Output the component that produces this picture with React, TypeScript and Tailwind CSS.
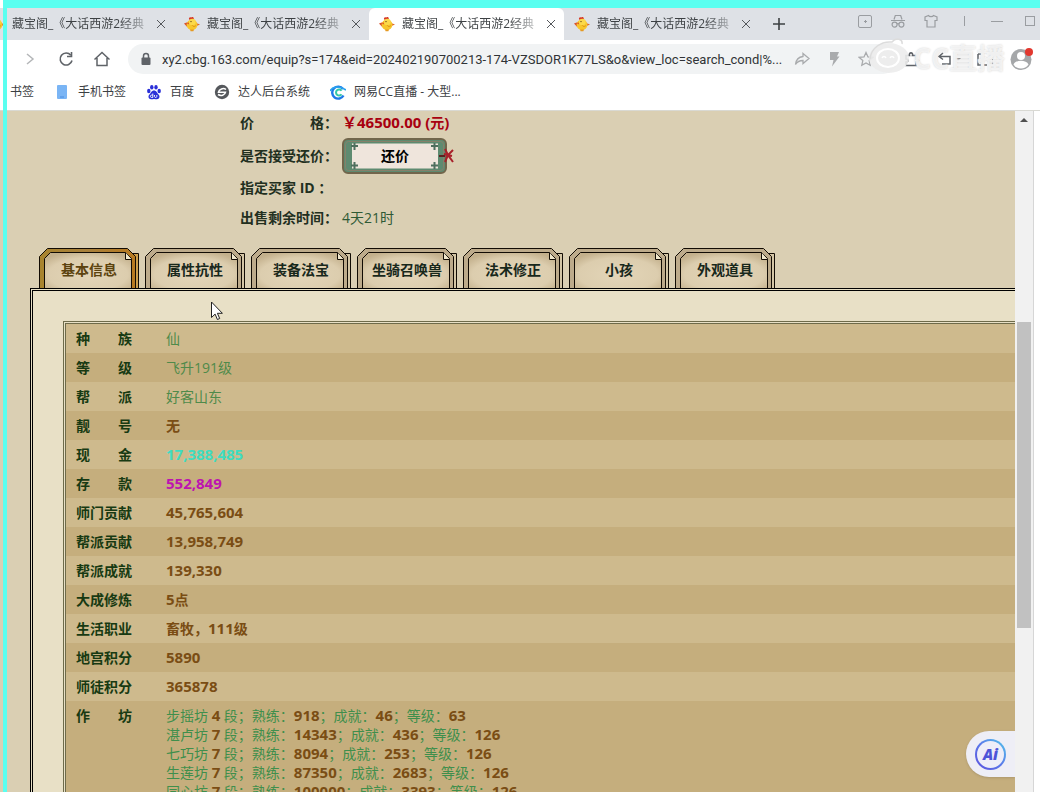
import React, { useState } from 'react';

interface InfoRow {
    label: string;
    value: string;
    tone: string;
}

interface Workshop {
    name: string;
    stage: number;
    skill: number;
    achievement: number;
    level: number;
}

const PAGE_TABS = ['基本信息', '属性抗性', '装备法宝', '坐骑召唤兽', '法术修正', '小孩', '外观道具'];

const GREEN = 'text-[#4f8a4a]';
const BROWN = 'text-[#7a4d14] font-bold';

const INFO_ROWS: InfoRow[] = [
    { label: '种族', value: '仙', tone: GREEN },
    { label: '等级', value: '飞升191级', tone: GREEN },
    { label: '帮派', value: '好客山东', tone: GREEN },
    { label: '靓号', value: '无', tone: BROWN },
    { label: '现金', value: '17,388,485', tone: 'text-[#3edcc0] font-bold' },
    { label: '存款', value: '552,849', tone: 'text-[#bd14b0] font-bold' },
    { label: '师门贡献', value: '45,765,604', tone: BROWN },
    { label: '帮派贡献', value: '13,958,749', tone: BROWN },
    { label: '帮派成就', value: '139,330', tone: BROWN },
    { label: '大成修炼', value: '5点', tone: BROWN },
    { label: '生活职业', value: '畜牧，111级', tone: BROWN },
    { label: '地宫积分', value: '5890', tone: BROWN },
    { label: '师徒积分', value: '365878', tone: BROWN },
];

const WORKSHOPS: Workshop[] = [
    { name: '步摇坊', stage: 4, skill: 918, achievement: 46, level: 63 },
    { name: '湛卢坊', stage: 7, skill: 14343, achievement: 436, level: 126 },
    { name: '七巧坊', stage: 7, skill: 8094, achievement: 253, level: 126 },
    { name: '生莲坊', stage: 7, skill: 87350, achievement: 2683, level: 126 },
    { name: '同心坊', stage: 7, skill: 100000, achievement: 3393, level: 126 },
];

const ChickIcon = () => (
    <svg className="h-4 w-4 shrink-0" viewBox="0 0 16 16">
        <path d="M0 7.5L4 6l1 4-2 .8z" fill="#d9532c" />
        <path d="M16 8.5L12 7l-.6 3.4z" fill="#e0672c" />
        <path d="M5 3.5C4.6 1.6 6 .8 7 1.6 8 .4 10 1 9.8 2.8L9 4.4z" fill="#d63a26" />
        <circle cx="8" cy="8.8" r="5.4" fill="#f7c62c" />
        <circle cx="8.4" cy="6" r="3.3" fill="#fbd94a" />
        <path d="M5 6.5l-2.4.8L5 8.4z" fill="#e2572a" />
        <circle cx="7" cy="5.6" r=".7" fill="#5b3710" />
        <path d="M8 9.2c1.2 1.8 3 1.6 4 .2" stroke="#e09a16" fill="none" />
        <path d="M6 13.6h4l-.6 1.6H6.6z" fill="#e59a22" />
    </svg>
);

const CloseIcon = () => (
    <svg className="h-2.5 w-2.5" viewBox="0 0 10 10" stroke="#55585c">
        <path d="M1 1l8 8M9 1L1 9" />
    </svg>
);

const BrowserTab = ({ active }: { active: boolean }) => (
    <div className={`flex w-[195px] shrink-0 items-center pl-[10px] ${active ? 'rounded-t-md bg-white' : ''}`}>
        <ChickIcon />
        <span className="ml-[7px] w-[134px] overflow-hidden whitespace-nowrap bg-gradient-to-r from-[#3c4043] from-80% to-[#3c4043]/30 bg-clip-text text-xs text-transparent">
            藏宝阁_《大话西游2经典
        </span>
        <button aria-label="关闭标签页" className="ml-[10px]">
            <CloseIcon />
        </button>
    </div>
);

const WindowControls = () => (
    <div className="flex h-[26px] items-center gap-[17px] pr-[2px] text-[#9a9da1]">
        <svg className="h-4 w-4" viewBox="0 0 16 16" fill="none" stroke="currentColor">
            <rect x="1.5" y="2.5" width="13" height="12" rx="1.5" />
            <path d="M7 8.5h3M8.5 7v3" />
        </svg>
        <svg className="h-4 w-4" viewBox="0 0 16 16" fill="none" stroke="currentColor" strokeWidth="1.2">
            <path d="M4 6.5l1.3-4h5.4l1.3 4M1 7.5h14" />
            <circle cx="4.6" cy="11.6" r="2.5" />
            <circle cx="11.4" cy="11.6" r="2.5" />
            <path d="M7 11c.6-.5 1.4-.5 2 0" />
        </svg>
        <svg className="h-4 w-4" viewBox="0 0 16 16" fill="none" stroke="currentColor" strokeWidth="1.2">
            <path d="M5.5 2.5c.6 1.6 4.4 1.6 5 0L14 4v3.5h-2V14H4V7.5H2V4z" />
        </svg>
        <svg className="h-4 w-4" viewBox="0 0 16 16" stroke="currentColor">
            <path d="M8.5 3v10" />
        </svg>
        <svg className="h-4 w-4" viewBox="0 0 16 16" stroke="currentColor">
            <path d="M2 8.5h12" />
        </svg>
        <svg className="h-4 w-4" viewBox="0 0 16 16" fill="none" stroke="currentColor">
            <rect x="3.5" y="3.5" width="9" height="9" />
        </svg>
    </div>
);

const TabStrip = () => (
    <div className="flex h-8 shrink-0 justify-between overflow-hidden bg-[#dee1e6]">
        <div className="-ml-[21px] flex">
            {[0, 1, 2, 3].map((n) => (
                <BrowserTab key={n} active={n === 2} />
            ))}
            <button aria-label="新建标签页" className="ml-[13px]">
                <svg className="h-3.5 w-3.5" viewBox="0 0 14 14" stroke="#3c4043" strokeWidth="1.6">
                    <path d="M7 1v12M1 7h12" />
                </svg>
            </button>
        </div>
        <WindowControls />
    </div>
);

const Watermark = () => (
    <div className="pointer-events-none absolute right-[35px] top-[38px] flex h-10 items-center gap-[2px] whitespace-nowrap text-[28px] font-bold leading-10 text-white/70 [text-shadow:0_0_2px_#cfcfcf]">
        <svg className="h-10 w-11" viewBox="0 0 44 40" fill="none">
            <ellipse cx="22" cy="20" rx="20" ry="15" fill="#ececec" fillOpacity=".9" />
            <path d="M3 21C4 10 14 3 25 4c4-5 11-3 10 2" stroke="#dcdcdc" strokeWidth="1.5" />
            <ellipse cx="21" cy="20" rx="11" ry="9" stroke="#fff" strokeWidth="2" />
            <path d="M15 20c1-2 3-2 4 0M23 20c1-2 3-2 4 0" stroke="#fff" strokeWidth="1.5" />
        </svg>
        CC直播
    </div>
);

const Toolbar = () => (
    <div className="flex h-[38px] shrink-0 items-center bg-white pl-[21px] pr-[7px] text-[#5f6368]">
        <div className="flex items-center gap-[18px]">
            <button aria-label="前进">
                <svg className="h-[18px] w-[18px]" viewBox="0 0 18 18" fill="none" stroke="#b4b6b8" strokeWidth="1.5">
                    <path d="M6 4l6 5-6 5" />
                </svg>
            </button>
            <button aria-label="刷新">
                <svg className="h-[18px] w-[18px]" viewBox="0 0 18 18" fill="none" stroke="currentColor" strokeWidth="1.6">
                    <path d="M13.8 5.2A6 6 0 1 0 15 10.5" />
                    <path d="M14.5 2v4.5H10" />
                </svg>
            </button>
            <button aria-label="主页">
                <svg className="h-[18px] w-[18px]" viewBox="0 0 18 18" fill="none" stroke="currentColor" strokeWidth="1.5">
                    <path d="M1.500 9.500L9 2.500l7.500 7M4 8v7.500h10V8" />
                </svg>
            </button>
        </div>
        <div className="ml-[17px] flex h-[30px] min-w-0 flex-1 items-center rounded-full bg-[#f1f3f4] pl-3">
            <svg className="h-3.5 w-3 shrink-0" viewBox="0 0 12 14">
                <rect x="1.5" y="5.5" width="9" height="7.5" rx="1" fill="#5f6368" />
                <path d="M3.5 6V4a2.500 2.500 0 0 1 5 0v2" fill="none" stroke="#5f6368" strokeWidth="1.5" />
            </svg>
            <input
                aria-label="地址栏"
                readOnly
                value="xy2.cbg.163.com/equip?s=174&eid=202402190700213-174-VZSDOR1K77LS&o&view_loc=search_cond|%..."
                className="ml-[10px] min-w-0 flex-1 bg-transparent pt-[2px] font-[Roboto,sans-serif] text-[13px] text-[#303336] outline-none"
            />
            <div className="flex items-center gap-4 pl-2 pr-6 text-[#a9abad]">
                <svg className="h-4 w-4" viewBox="0 0 16 16" fill="none" stroke="currentColor" strokeWidth="1.3">
                    <path d="M9 2.500L15 7.500 9 12.500V9.500C5 9.500 3 11 1.500 13.500 2 9 4.500 6 9 5.500z" />
                </svg>
                <svg className="h-4 w-4" viewBox="0 0 16 16" fill="currentColor">
                    <path d="M4 1h9l-2 4.500h2.500L6 15.500l1.500-6.500H4z" />
                </svg>
                <svg className="h-4 w-4" viewBox="0 0 16 16" fill="none" stroke="currentColor" strokeWidth="1.3">
                    <path d="M8 1.500l2 4.400 4.800.5-3.600 3.200 1 4.700L8 11.900l-4.200 2.400 1-4.700L1.200 6.400 6 5.900z" />
                </svg>
            </div>
        </div>
        <div className="ml-[7px] flex items-center gap-4">
            <svg className="h-4 w-4" viewBox="0 0 16 16" fill="none" stroke="currentColor" strokeWidth="1.6">
                <path d="M1 4.500h3.500c-1-3.500 4-3.500 3 0H11V8c3.300-.8 3.300 4 0 3v3.500H1V11c2.500 0 2.500-3 0-3z" />
            </svg>
            <svg className="h-4 w-6" viewBox="0 0 24 16" fill="none" stroke="currentColor" strokeWidth="1.5">
                <path d="M6 2L2 5.500l4 3M2 5.500h11V13H5" />
                <path d="M18 7h6l-3 3z" fill="currentColor" stroke="none" />
            </svg>
            <svg className="h-4 w-4" viewBox="0 0 16 16" fill="none" stroke="currentColor" strokeWidth="1.5">
                <path d="M1 3v11h3M1 3h3M7 14h3M13 13v-3M16 8v6" />
            </svg>
            <button aria-label="用户">
                <svg className="h-6 w-6" viewBox="0 0 24 24">
                    <circle cx="12" cy="12.500" r="10.500" fill="#a5a7a9" />
                    <circle cx="12" cy="9" r="4" fill="#fff" />
                    <path d="M4.500 17.500c2-5 13-5 15 0a9 9 0 0 1-15 0z" fill="#fff" />
                    <circle cx="20" cy="5" r="4" fill="#e2382f" />
                </svg>
            </button>
        </div>
    </div>
);

const BookmarkBar = () => (
    <nav className="flex h-[33px] shrink-0 items-center border-b border-[#d9d9d3] bg-white pb-1 pl-[10px] text-xs text-[#3c4043]">
        <a href="#bookmarks">书签</a>
        <a href="#mobile" className="ml-5 flex items-center gap-2">
            <svg className="h-4 w-4" viewBox="0 0 16 16">
                <rect x="3" y="1" width="10" height="14" rx="1" fill="#7ab5f5" />
                <path d="M6 13h4" stroke="#4b8de0" />
            </svg>
            手机书签
        </a>
        <a href="#baidu" className="ml-5 flex items-center gap-2">
            <svg className="h-4 w-4" viewBox="0 0 16 16" fill="#2a2fd8">
                <ellipse cx="2.8" cy="7" rx="1.7" ry="2.2" />
                <ellipse cx="5.8" cy="3.2" rx="1.7" ry="2.3" />
                <ellipse cx="10" cy="3.2" rx="1.7" ry="2.3" />
                <ellipse cx="13.2" cy="7" rx="1.7" ry="2.2" />
                <path d="M8 6.500c2.500 0 3 2.500 4.600 4 1.800 2 .8 4.700-1.600 4.700-1.200 0-2-.3-3-.3s-1.800.3-3 .3c-2.400 0-3.400-2.700-1.600-4.700C5 9 5.500 6.500 8 6.500z" />
                <path d="M6.800 9.500v4H5.500c-1.500 0-1.500-2.400 0-2.400h1.300M8.500 11v1.500c0 1.300 2.300 1.300 2.300 0V11" fill="none" stroke="#fff" strokeWidth=".9" />
            </svg>
            百度
        </a>
        <a href="#console" className="ml-5 flex items-center gap-2">
            <svg className="h-4 w-4" viewBox="0 0 16 16">
                <circle cx="8" cy="8" r="7.2" fill="#55585c" />
                <path d="M12 5.500C9.500 3.500 5 5 4.500 8.200h7C11 11 7 12.500 4 10.500" stroke="#fff" strokeWidth="1.6" fill="none" />
            </svg>
            达人后台系统
        </a>
        <a href="#cc" className="ml-5 flex items-center gap-2">
            <svg className="h-4 w-4" viewBox="0 0 16 16" fill="none">
                <path d="M13.500 11.500A6 6 0 1 1 13 5" stroke="#1d79e8" strokeWidth="2.4" />
                <path d="M11.500 6.800a3 3 0 1 0 0 3.400" stroke="#35c8a8" strokeWidth="2" />
                <path d="M0 7C2 3 9 1 16 6" stroke="#29a2ee" strokeWidth="1.6" />
            </svg>
            网易CC直播 - 大型...
        </a>
    </nav>
);

const BargainButton = () => (
    <button className="relative flex h-9 w-[106px] items-center justify-center text-sm font-bold text-black">
        <svg className="absolute left-0 top-0 h-9 w-[114px]" viewBox="0 0 114 36" fill="none">
            <rect x="1" y="1" width="103" height="34" rx="5" fill="#5e8a70" stroke="#71664c" strokeWidth="2" />
            <rect x="3.500" y="3.500" width="98" height="29" rx="3" stroke="#86806a" />
            <rect x="10" y="5.500" width="86" height="25" fill="#efe5dc" />
            <g stroke="#4f6f5e" strokeWidth="2">
                <path d="M9 8h7M12.500 5v7" />
                <path d="M89 8h7M92.500 5v7" />
                <path d="M9 27.500h7M12.500 24v7" />
                <path d="M89 27.500h7M92.500 24v7" />
            </g>
            <path d="M97 18h6" stroke="#5d2020" strokeWidth="2" />
            <path d="M102 16l8 2M103 11l3 6-3 7M111 12l-5 5 5 7" stroke="#a8202a" strokeWidth="2" />
        </svg>
        <span className="relative">还价</span>
    </button>
);

// label spread over the full width of its column
const SpreadLabel = ({ text }: { text: string }) => (
    <div className="flex w-14 justify-between">
        {[...text].map((char, i) => (
            <span key={i}>{char}</span>
        ))}
    </div>
);

// bold latin digits are drawn one step larger than the CJK glyphs
const BoldNumber = ({ children }: { children: React.ReactNode }) => (
    <b className="text-[15px] font-bold">{children}</b>
);

const SaleInfo = () => (
    <dl className="grid grid-cols-[98px_1fr] grid-rows-[23px_44px_20px_40px] items-center gap-x-1 pl-[240px] text-sm text-[#22301f]">
        <dt className="flex w-[98px] justify-between font-bold">
            <span>价</span>
            <span>格：</span>
        </dt>
        <dd className="text-[15px] font-bold text-[#a80010]">
            ￥46500.00 (<span className="text-sm">元</span>)
        </dd>
        <dt className="font-bold">是否接受还价：</dt>
        <dd>
            <BargainButton />
        </dd>
        <dt className="whitespace-nowrap font-bold">指定买家 ID ：</dt>
        <dd />
        <dt className="font-bold">出售剩余时间：</dt>
        <dd className="text-[#2f5a35]">4天21时</dd>
    </dl>
);

interface SectionTabProps {
    title: string;
    active: boolean;
    onSelect: () => void;
}

const SectionTab = ({ title, active, onSelect }: SectionTabProps) => (
    <button
        role="tab"
        aria-selected={active}
        onClick={onSelect}
        className={`relative h-10 w-[100px] shrink-0 pb-px pt-1 text-sm font-bold ${active ? 'text-[#5c430f]' : 'text-[#18281b]'}`}
    >
        <svg className="absolute inset-0 h-10 w-[100px]" viewBox="0 0 100 40" fill="none" stroke="#120c04">
            <path d="M93 5.500h6.500V41H93z" fill={active ? '#cfa04c' : '#d4c6a6'} />
            <path d="M.5 41V8.500l8-8h80l8 8V41" fill={active ? 'url(#gold)' : '#bdab8b'} />
            <path d="M5.500 41V10.500l6-6h75l6 6V41" fill="url(#paper)" />
            <path d="M86.500 4.500v7h6" fill="#f1e8cd" />
        </svg>
        <span className="relative whitespace-nowrap">{title}</span>
    </button>
);

// gradients shared by every section tab
const TabGradients = () => (
    <svg className="absolute h-0 w-0">
        <defs>
            <radialGradient id="paper" cx="50%" cy="60%" r="65%">
                <stop offset="0" stopColor="#e3d5b8" />
                <stop offset=".7" stopColor="#dccdae" />
                <stop offset="1" stopColor="#c3b08c" />
            </radialGradient>
            <linearGradient id="gold">
                <stop offset="0" stopColor="#a8842e" />
                <stop offset=".5" stopColor="#a8803c" />
                <stop offset="1" stopColor="#b87a20" />
            </linearGradient>
        </defs>
    </svg>
);

const InfoTable = () => (
    <table className="w-full border-collapse text-left text-sm leading-[19px]">
        <tbody>
            {INFO_ROWS.map((row) => (
                <tr key={row.label} className="bg-[#ceba8d] even:bg-[#c5ae7d]">
                    <th className="w-[100px] py-[5px] pl-[10px] font-bold text-[#173a12]">
                        <SpreadLabel text={row.label} />
                    </th>
                    <td className={`py-[5px] ${row.tone}`}>
                        {row.value.split(/([\d,]+)/).map((part, i) => (
                            <span key={i} className={i % 2 && row.tone !== GREEN ? 'text-[15px]' : ''}>
                                {part}
                            </span>
                        ))}
                    </td>
                </tr>
            ))}
            <tr className="bg-[#c5ae7d] align-top">
                <th className="py-[5px] pl-[10px] font-bold text-[#173a12]">
                    <SpreadLabel text="作坊" />
                </th>
                <td className="py-[5px] text-[#3f8f4c] [&_b]:text-[#7a4d14]">
                    {WORKSHOPS.map((shop) => (
                        <p key={shop.name} className="whitespace-nowrap">
                            {shop.name} <BoldNumber>{shop.stage}</BoldNumber> 段；熟练：
                            <BoldNumber>{shop.skill}</BoldNumber>；成就：
                            <BoldNumber>{shop.achievement}</BoldNumber>；等级：
                            <BoldNumber>{shop.level}</BoldNumber>
                        </p>
                    ))}
                </td>
            </tr>
        </tbody>
    </table>
);

const ScrollBar = () => (
    <div className="flex w-[18px] shrink-0 flex-col bg-[#f1f1f1] px-px">
        <button aria-label="向上滚动" className="flex h-[18px] items-center justify-center">
            <svg className="h-1 w-2" viewBox="0 0 8 4">
                <path d="M0 4l4-4 4 4z" fill="#505050" />
            </svg>
        </button>
        <div className="mx-px mt-[193px] h-[306px] bg-[#c1c1c1]" />
    </div>
);

export default function App() {
    const [current, setCurrent] = useState(0);

    return (
        <div className="relative flex h-screen flex-col overflow-hidden bg-white pt-2 font-['Open_Sans','Noto_Sans_CJK_SC',sans-serif]">
            <TabStrip />
            <Toolbar />
            <BookmarkBar />

            <div className="flex min-h-0 flex-1">
                <main className="relative min-w-0 flex-1 overflow-hidden bg-[#dacfb3]">
                    <SaleInfo />
                    <TabGradients />
                    <div role="tablist" className="mt-[10px] flex gap-[6px] pl-[39px]">
                        {PAGE_TABS.map((title, index) => (
                            <SectionTab
                                key={title}
                                title={title}
                                active={index === current}
                                onSelect={() => setCurrent(index)}
                            />
                        ))}
                    </div>
                    <section className="ml-[30px] border-l-3 border-t-3 border-double border-black bg-[#e8e0c6] pl-[30px] pt-[30px]">
                        <div className="border-l-3 border-t-3 border-double border-[#6e6b4a]">
                            <InfoTable />
                        </div>
                    </section>

                    <button
                        aria-label="Ai"
                        className="absolute bottom-[15px] right-0 flex h-[46px] w-[49px] items-center rounded-l-full bg-[#eeeef6] pl-[9px] shadow"
                    >
                        <span className="flex h-[31px] w-[31px] items-center justify-center rounded-full bg-gradient-to-bl from-[#4fc6e8] via-[#5a78ea] to-[#5a4fdc] p-[2px]">
                            <span className="flex h-full w-full items-center justify-center rounded-full bg-[#eeeef8] text-[15px] font-extrabold italic text-[#4d55d8]">
                                Ai
                            </span>
                        </span>
                    </button>
                </main>
                <ScrollBar />
                <div className="w-[7px] shrink-0 border-l border-[#d6d6d6] bg-white" />
            </div>

            <Watermark />
            <div className="pointer-events-none absolute inset-y-0 left-[3px] right-0 border-l-4 border-t-8 border-[#5afff0]" />
            <svg className="pointer-events-none absolute left-[211px] top-[301px] h-5 w-3" viewBox="0 0 12 20">
                <path d="M.5 1v15.500l3.600-3.400 2.300 5.400 2.300-1-2.300-5.200h5z" fill="#fff" stroke="#222" />
            </svg>
        </div>
    );
}
